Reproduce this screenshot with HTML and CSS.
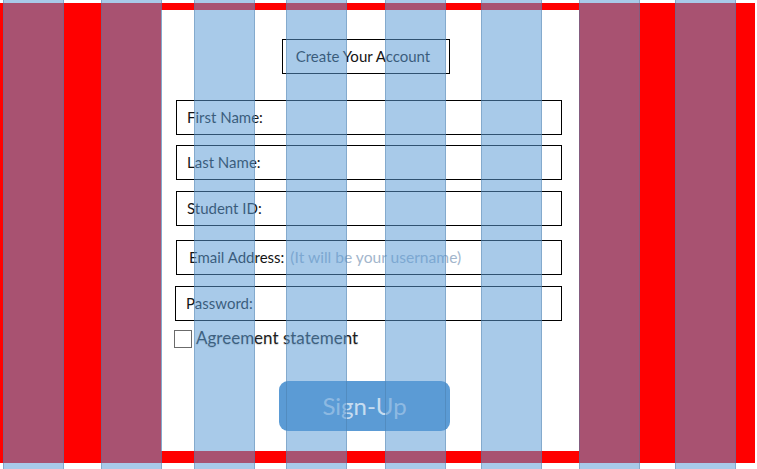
FILE: index.html
```html
<!DOCTYPE html>
<html>
<head>
<meta charset="utf-8">
<title>Create Your Account</title>
<link rel="stylesheet" href="styles.css">
</head>
<body>
<div class="page">
  <div class="red">
    <form class="panel">
      <div class="title">Create Your Account</div>
      <div class="fields">
        <div class="field">First Name:</div>
        <div class="field f-last">Last Name:</div>
        <div class="field f-id">Student ID:</div>
        <div class="field f-email">Email Address:<span class="hint">(It will be your username)</span></div>
        <div class="field f-pass">Password:</div>
      </div>
      <label class="agree"><span class="box"></span><span class="agree-text">Agreement statement</span></label>
      <button type="button" class="signup">Sign-Up</button>
    </form>
  </div>
  <div class="stripes">
    <div class="stripe s1"></div>
    <div class="stripe s2"></div>
    <div class="stripe s3"></div>
    <div class="stripe s4"></div>
    <div class="stripe s5"></div>
    <div class="stripe s6"></div>
    <div class="stripe s7"></div>
    <div class="stripe s8"></div>
  </div>
</div>
</body>
</html>
```

FILE: styles.css
```css
html, body {
  margin: 0;
  padding: 0;
  background: #ffffff;
}
body {
  font-family: Lato, "Open Sans", sans-serif;
}
.page {
  position: relative;
  width: 757px;
  height: 469px;
  padding-top: 3px;
  box-sizing: border-box;
  overflow: hidden;
  background: #ffffff;
}
.red {
  width: 755px;
  height: 460px;
  padding: 7px 176px 12px 161px;
  box-sizing: border-box;
  background: #ff0000;
}
.panel {
  height: 100%;
  margin: 0;
  padding-top: 29px;
  box-sizing: border-box;
  background: #ffffff;
  display: flex;
  flex-direction: column;
  align-items: flex-start;
}
.title {
  margin-left: 121px;
  width: 168px;
  height: 35px;
  box-sizing: border-box;
  border: 1px solid #000;
  display: flex;
  align-items: center;
  justify-content: center;
  padding: 0 6px 2px 0;
  font-size: 15px;
  color: #141414;
}
.fields {
  margin-top: 26px;
  margin-left: 15px;
  width: 386px;
  display: flex;
  flex-direction: column;
}
.field {
  height: 35px;
  box-sizing: border-box;
  border: 1px solid #000;
  padding: 0 0 2px 10px;
  display: flex;
  align-items: center;
  font-size: 15px;
  color: #141414;
  white-space: nowrap;
}
.f-last { margin-top: 10px; }
.f-id { margin-top: 11px; }
.f-email { margin-top: 14px; padding-left: 12px; }
.f-pass { margin-top: 11px; margin-left: -1px; width: 387px; }
.hint {
  margin-left: 6px;
  color: #a3b6cc;
  font-size: 15.6px;
}
.agree {
  margin-top: 9px;
  margin-left: 13px;
  height: 18px;
  display: flex;
  align-items: center;
  gap: 4px;
  font-size: 17px;
  line-height: 18px;
  font-weight: 400;
  color: #1e1e1e;
  text-shadow: 0 1px 1px rgba(0, 0, 0, 0.18);
}
.agree-text {
  padding-bottom: 2px;
}
.box {
  width: 18px;
  height: 18px;
  box-sizing: border-box;
  border: 1.5px solid #6b6b6b;
  background: #fff;
}
.signup {
  margin-top: 33px;
  margin-left: 118px;
  width: 171px;
  height: 50px;
  box-sizing: border-box;
  border: none;
  border-radius: 9px;
  background: #5b9bd5;
  color: rgba(255, 255, 255, 0.68);
  font-family: Lato, "Open Sans", sans-serif;
  font-size: 24px;
  line-height: 1;
  padding: 0;
}
.stripes {
  position: absolute;
  inset: 0;
  pointer-events: none;
}
.stripe {
  position: absolute;
  top: -1px;
  bottom: -1px;
  width: 61px;
  box-sizing: border-box;
  background: rgba(91, 155, 213, 0.53);
  border-left: 1px solid rgba(65, 113, 156, 0.35);
  border-right: 1px solid rgba(65, 113, 156, 0.35);
}
.s1 { left: 3px; }
.s2 { left: 101px; }
.s3 { left: 194px; }
.s4 { left: 286px; }
.s5 { left: 385px; }
.s6 { left: 481px; }
.s7 { left: 579px; }
.s8 { left: 675px; }
```
